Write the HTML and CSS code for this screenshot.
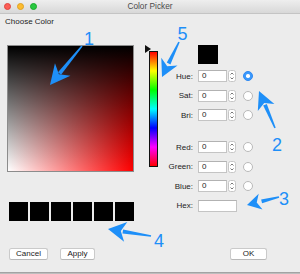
FILE: index.html
```html
<!DOCTYPE html>
<html>
<head>
<meta charset="utf-8">
<link rel="stylesheet" href="styles.css">
</head>
<body>
<div class="window">
  <div class="titlebar">
    <div class="lights"><span class="light red"></span><span class="light yellow"></span><span class="light green"></span></div>
    <div class="title">Color Picker</div>
    <div></div>
  </div>
  <div class="heading">Choose Color</div>
  <div class="picker">
    <div class="left">
      <div class="square"></div>
      <div class="swatches">
        <span class="swatch"></span><span class="swatch"></span><span class="swatch"></span><span class="swatch"></span><span class="swatch"></span><span class="swatch"></span>
      </div>
    </div>
    <div class="hue">
      <span class="marker"></span>
      <div class="bar"></div>
    </div>
    <div class="right">
      <div class="preview"></div>
      <div class="group">
        <label class="lbl">Hue:</label><div class="field">0</div><svg class="stepper" viewBox="0 0 8 12" width="8" height="12"><rect x="0.5" y="0.5" width="7" height="11" rx="2" fill="#fff" stroke="#c6c6c6"/><path d="M2.5 4.5 L4 3 L5.5 4.5 M2.5 7.5 L4 9 L5.5 7.5" fill="none" stroke="#555" stroke-width="0.8"/></svg><span class="radio on"></span>
        <label class="lbl">Sat:</label><div class="field">0</div><svg class="stepper" viewBox="0 0 8 12" width="8" height="12"><rect x="0.5" y="0.5" width="7" height="11" rx="2" fill="#fff" stroke="#c6c6c6"/><path d="M2.5 4.5 L4 3 L5.5 4.5 M2.5 7.5 L4 9 L5.5 7.5" fill="none" stroke="#555" stroke-width="0.8"/></svg><span class="radio"></span>
        <label class="lbl">Bri:</label><div class="field">0</div><svg class="stepper" viewBox="0 0 8 12" width="8" height="12"><rect x="0.5" y="0.5" width="7" height="11" rx="2" fill="#fff" stroke="#c6c6c6"/><path d="M2.5 4.5 L4 3 L5.5 4.5 M2.5 7.5 L4 9 L5.5 7.5" fill="none" stroke="#555" stroke-width="0.8"/></svg><span class="radio"></span>
      </div>
      <div class="group second">
        <label class="lbl">Red:</label><div class="field">0</div><svg class="stepper" viewBox="0 0 8 12" width="8" height="12"><rect x="0.5" y="0.5" width="7" height="11" rx="2" fill="#fff" stroke="#c6c6c6"/><path d="M2.5 4.5 L4 3 L5.5 4.5 M2.5 7.5 L4 9 L5.5 7.5" fill="none" stroke="#555" stroke-width="0.8"/></svg><span class="radio"></span>
        <label class="lbl">Green:</label><div class="field">0</div><svg class="stepper" viewBox="0 0 8 12" width="8" height="12"><rect x="0.5" y="0.5" width="7" height="11" rx="2" fill="#fff" stroke="#c6c6c6"/><path d="M2.5 4.5 L4 3 L5.5 4.5 M2.5 7.5 L4 9 L5.5 7.5" fill="none" stroke="#555" stroke-width="0.8"/></svg><span class="radio"></span>
        <label class="lbl">Blue:</label><div class="field">0</div><svg class="stepper" viewBox="0 0 8 12" width="8" height="12"><rect x="0.5" y="0.5" width="7" height="11" rx="2" fill="#fff" stroke="#c6c6c6"/><path d="M2.5 4.5 L4 3 L5.5 4.5 M2.5 7.5 L4 9 L5.5 7.5" fill="none" stroke="#555" stroke-width="0.8"/></svg><span class="radio"></span>
        <label class="lbl">Hex:</label><div class="field hex"></div>
      </div>
    </div>
  </div>
  <div class="buttons">
    <div class="btn cancel">Cancel</div>
    <div class="btn apply">Apply</div>
    <div class="btn ok">OK</div>
  </div>
</div>
<svg class="annot" viewBox="0 0 300 274" width="300" height="274">
  <g fill="#1e8ff8">
    <polygon points="81.4,45.5 57.95,72.13 61.05,74.67 82.6,46.5"/>
    <polygon points="50,85 54.96,63.15 58.9,74.2 70.44,75.85"/>
    <polygon points="178.3,41.7 166.8,62.6 170.4,64.4 179.7,42.3"/>
    <polygon points="162,77 161.3,57.8 167.2,66.2 177.5,65.6"/>
    <polygon points="275.7,127.7 266.8,104 263.2,105.6 274.3,128.3"/>
    <polygon points="259,91 274.4,103.9 264.2,102.9 257.8,111.1"/>
    <polygon points="278.8,196.3 261.1,199.5 262.1,203.3 279.2,197.7"/>
    <polygon points="247,205 258.7,193.8 256.7,202.6 262.5,209.4"/>
    <polygon points="151.1,235.3 123.1,229.4 122.5,233.4 150.9,236.7"/>
    <polygon points="108,229 127.3,222 120.8,231.1 124.1,241.8"/>
    <text x="89" y="45" class="num">1</text>
    <text x="182.5" y="40" class="num">5</text>
    <text x="277" y="151" class="num">2</text>
    <text x="284" y="205" class="num">3</text>
    <text x="159" y="247" class="num">4</text>
  </g>
</svg>
</body>
</html>
```
FILE: styles.css
```css
html, body {
  margin: 0;
  padding: 0;
}
body {
  width: 300px;
  height: 274px;
  background: #bdbdbd;
  font-family: "Liberation Sans", Arial, sans-serif;
  font-size: 8px;
  color: #1c1c1c;
  position: relative;
  overflow: hidden;
}
.window {
  height: 273px;
  box-sizing: border-box;
  background: #ececec;
  border-bottom: 1px solid #a3a3a3;
}
.titlebar {
  height: 13px;
  border-bottom: 1px solid #c4c4c4;
  background: linear-gradient(#eeeeee, #d8d8d8);
  display: grid;
  grid-template-columns: 1fr auto 1fr;
  align-items: center;
}
.lights {
  display: flex;
  gap: 6px;
  padding-left: 4px;
}
.light {
  width: 7px;
  height: 7px;
  border-radius: 50%;
  box-sizing: border-box;
}
.red { background: #fc5f57; border: 0.5px solid #e0443e; }
.yellow { background: #fdbc2e; border: 0.5px solid #dea123; }
.green { background: #28c840; border: 0.5px solid #1aab29; }
.title {
  font-size: 8.3px;
  color: #4b4b4b;
  line-height: 13px;
}
.heading {
  margin-top: 3px;
  margin-left: 5px;
  line-height: 10px;
  height: 10px;
}
.picker {
  display: flex;
  margin-top: 18px;
}
.left {
  margin-left: 7px;
  width: 127px;
}
.square {
  width: 127px;
  height: 127px;
  box-sizing: border-box;
  border: 1px solid #8c8c8c;
  background:
    linear-gradient(to bottom, #000 0%, rgba(0,0,0,0) 100%),
    linear-gradient(to right, #fff 0%, #f00 100%);
}
.swatches {
  display: flex;
  gap: 2px;
  margin-top: 30px;
  margin-left: 2px;
}
.swatch {
  width: 20px;
  height: 19px;
  background: #000;
}
.hue {
  position: relative;
  margin-left: 15px;
  padding-top: 6px;
}
.bar {
  width: 9px;
  height: 116px;
  box-sizing: border-box;
  border: 1px solid #111;
  background: linear-gradient(to bottom, #f00 0%, #ff0 16.6%, #0f0 33.3%, #0ff 50%, #00f 66.6%, #f0f 83.3%, #f00 100%);
}
.marker {
  position: absolute;
  left: -4px;
  top: 0;
  width: 0;
  height: 0;
  border-top: 4px solid transparent;
  border-bottom: 4px solid transparent;
  border-left: 6px solid #111;
}
.right {
  margin-left: 5px;
}
.preview {
  margin-left: 35px;
  width: 20px;
  height: 19px;
  background: #000;
}
.group {
  display: grid;
  grid-template-columns: 30px 29px 8px 10px;
  column-gap: 5px;
  grid-auto-rows: 12px;
  row-gap: 7.5px;
  margin-top: 6px;
  align-items: center;
}
.group .stepper {
  margin-left: -4px;
}
.group.second {
  margin-top: 20px;
}
.lbl {
  text-align: right;
  color: #222;
}
.field {
  height: 12px;
  box-sizing: border-box;
  background: #fff;
  border: 1px solid #c4c4c4;
  border-top-color: #b2b2b2;
  padding-left: 3px;
  line-height: 10px;
  font-size: 8px;
}
.field.hex {
  width: 39px;
  grid-column: 2 / span 3;
}
.stepper {
  display: block;
}
.radio {
  width: 10px;
  height: 10px;
  box-sizing: border-box;
  border-radius: 50%;
  background: #fff;
  border: 1px solid #b9b9b9;
  justify-self: start;
  margin-left: -2px;
  display: grid;
  place-items: center;
}
.radio.on {
  background: #3b99fc;
  border-color: #2f89f2;
}
.radio.on::after {
  content: "";
  width: 3.5px;
  height: 3.5px;
  border-radius: 50%;
  background: #fff;
}
.buttons {
  display: flex;
  margin-top: 27px;
  padding-left: 9px;
  padding-right: 33px;
}
.btn {
  height: 12px;
  box-sizing: border-box;
  background: #fff;
  border: 1px solid #cacaca;
  border-bottom-color: #b8b8b8;
  border-radius: 2.5px;
  text-align: center;
  line-height: 10px;
  font-size: 8px;
  color: #1a1a1a;
}
.cancel { width: 39px; }
.apply { width: 35px; margin-left: 12px; }
.ok { width: 37px; margin-left: auto; }
.annot {
  position: absolute;
  left: 0;
  top: 0;
  pointer-events: none;
}
.num {
  font-family: "Liberation Sans", Arial, sans-serif;
  font-size: 18px;
  text-anchor: middle;
}
```
